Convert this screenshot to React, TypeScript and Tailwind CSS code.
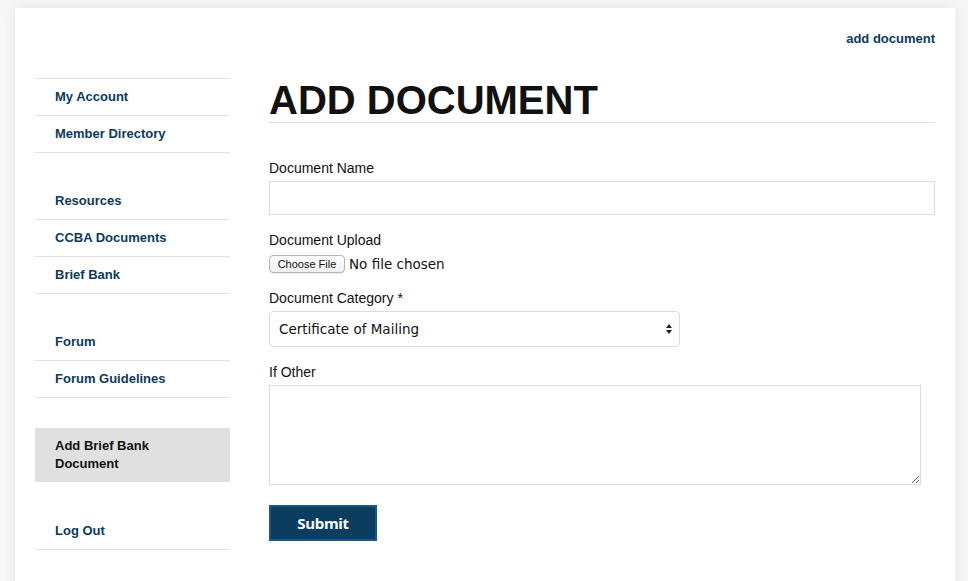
import React from "react";

const navItem =
  "block h-[37px] border-b border-[#e2e2e2] pl-[20px] pt-[9px] text-[13px] leading-[18px] font-bold text-[#0d3a5c]";

function NavGroup({ items, top = false, mb = "mb-[30px]" }: { items: string[]; top?: boolean; mb?: string }) {
  return (
    <ul className={`${top ? "border-t border-[#e2e2e2]" : ""} ${mb}`}>
      {items.map((t) => (
        <li key={t} className={navItem}>
          {t}
        </li>
      ))}
    </ul>
  );
}

export default function App() {
  return (
    <div
      className="h-[581px] overflow-hidden bg-[#f6f6f6] pt-[8px]"
      style={{ fontFamily: '"Liberation Sans", Arial, sans-serif' }}
    >
      <div className="ml-[15px] mr-[13px] h-[600px] bg-white px-[20px] pt-[22px] shadow-[0_0_12px_rgba(0,0,0,0.07)]">
        <div className="flex justify-end text-[13px] font-bold leading-[18px] text-[#0d3a5c]">add document</div>
        <div className="mt-[30px] flex gap-[39px]">
          <aside className="w-[195px] shrink-0">
            <NavGroup top items={["My Account", "Member Directory"]} />
            <NavGroup items={["Resources", "CCBA Documents", "Brief Bank"]} />
            <NavGroup items={["Forum", "Forum Guidelines"]} />
            <div className="mb-[31px] h-[54px] bg-[#e0e0e0] pl-[20px] pt-[9px] text-[13px] font-bold leading-[18px] text-[#111]">
              Add Brief Bank
              <br />
              Document
            </div>
            <NavGroup items={["Log Out"]} />
          </aside>
          <main className="flex-1">
            <h1 className="border-b border-[#e0e0e0] text-[40px] font-bold leading-[44px] text-[#111]">
              ADD DOCUMENT
            </h1>
            <form className="mt-[35px] text-[14px] leading-[20px] text-[#111]">
              <label className="mb-[3px] block">Document Name</label>
              <div className="h-[34px] w-full border border-[#dcdcdc] bg-white" />

              <label className="mb-[3px] mt-[15px] block">Document Upload</label>
              <div className="flex h-[20px] items-center pt-[1px]">
                <span className="flex h-[18px] w-[76px] items-center justify-center rounded-[4px] border border-[#b5b5b5] bg-gradient-to-b from-white to-[#f0f0f0] text-[11px] leading-[14px] text-[#111] shadow-[0_1px_1px_rgba(0,0,0,0.08)]">
                  Choose File
                </span>
                <span
                  className="ml-[4px] text-[13.5px] text-[#111]"
                  style={{ fontFamily: '"DejaVu Sans", Verdana, sans-serif' }}
                >
                  No file chosen
                </span>
              </div>

              <label className="mb-[3px] mt-[15px] block">Document Category *</label>
              <div
                className="flex h-[36px] w-[411px] items-center justify-between rounded-[4px] border border-[#dcdcdc] bg-white pl-[9px] pr-[6px] text-[13.5px] text-[#111]"
                style={{ fontFamily: '"DejaVu Sans", Verdana, sans-serif' }}
              >
                <span>Certificate of Mailing</span>
                <svg width="8" height="12" viewBox="0 0 8 12">
                  <path d="M4 1 L7 5 L1 5 Z" fill="#222" />
                  <path d="M4 11 L7 7 L1 7 Z" fill="#222" />
                </svg>
              </div>

              <label className="mb-[3px] mt-[15px] block">If Other</label>
              <textarea className="block h-[100px] w-[652px] border border-[#dcdcdc] bg-white outline-none" />

              <button
                type="button"
                className="mt-[20px] h-[36px] w-[108px] border-2 border-[#1a5785] bg-[#0b3d60] text-[15px] font-bold tracking-[-0.3px] text-white"
                style={{ fontFamily: '"Open Sans", sans-serif' }}
              >
                Submit
              </button>
            </form>
          </main>
        </div>
      </div>
    </div>
  );
}
